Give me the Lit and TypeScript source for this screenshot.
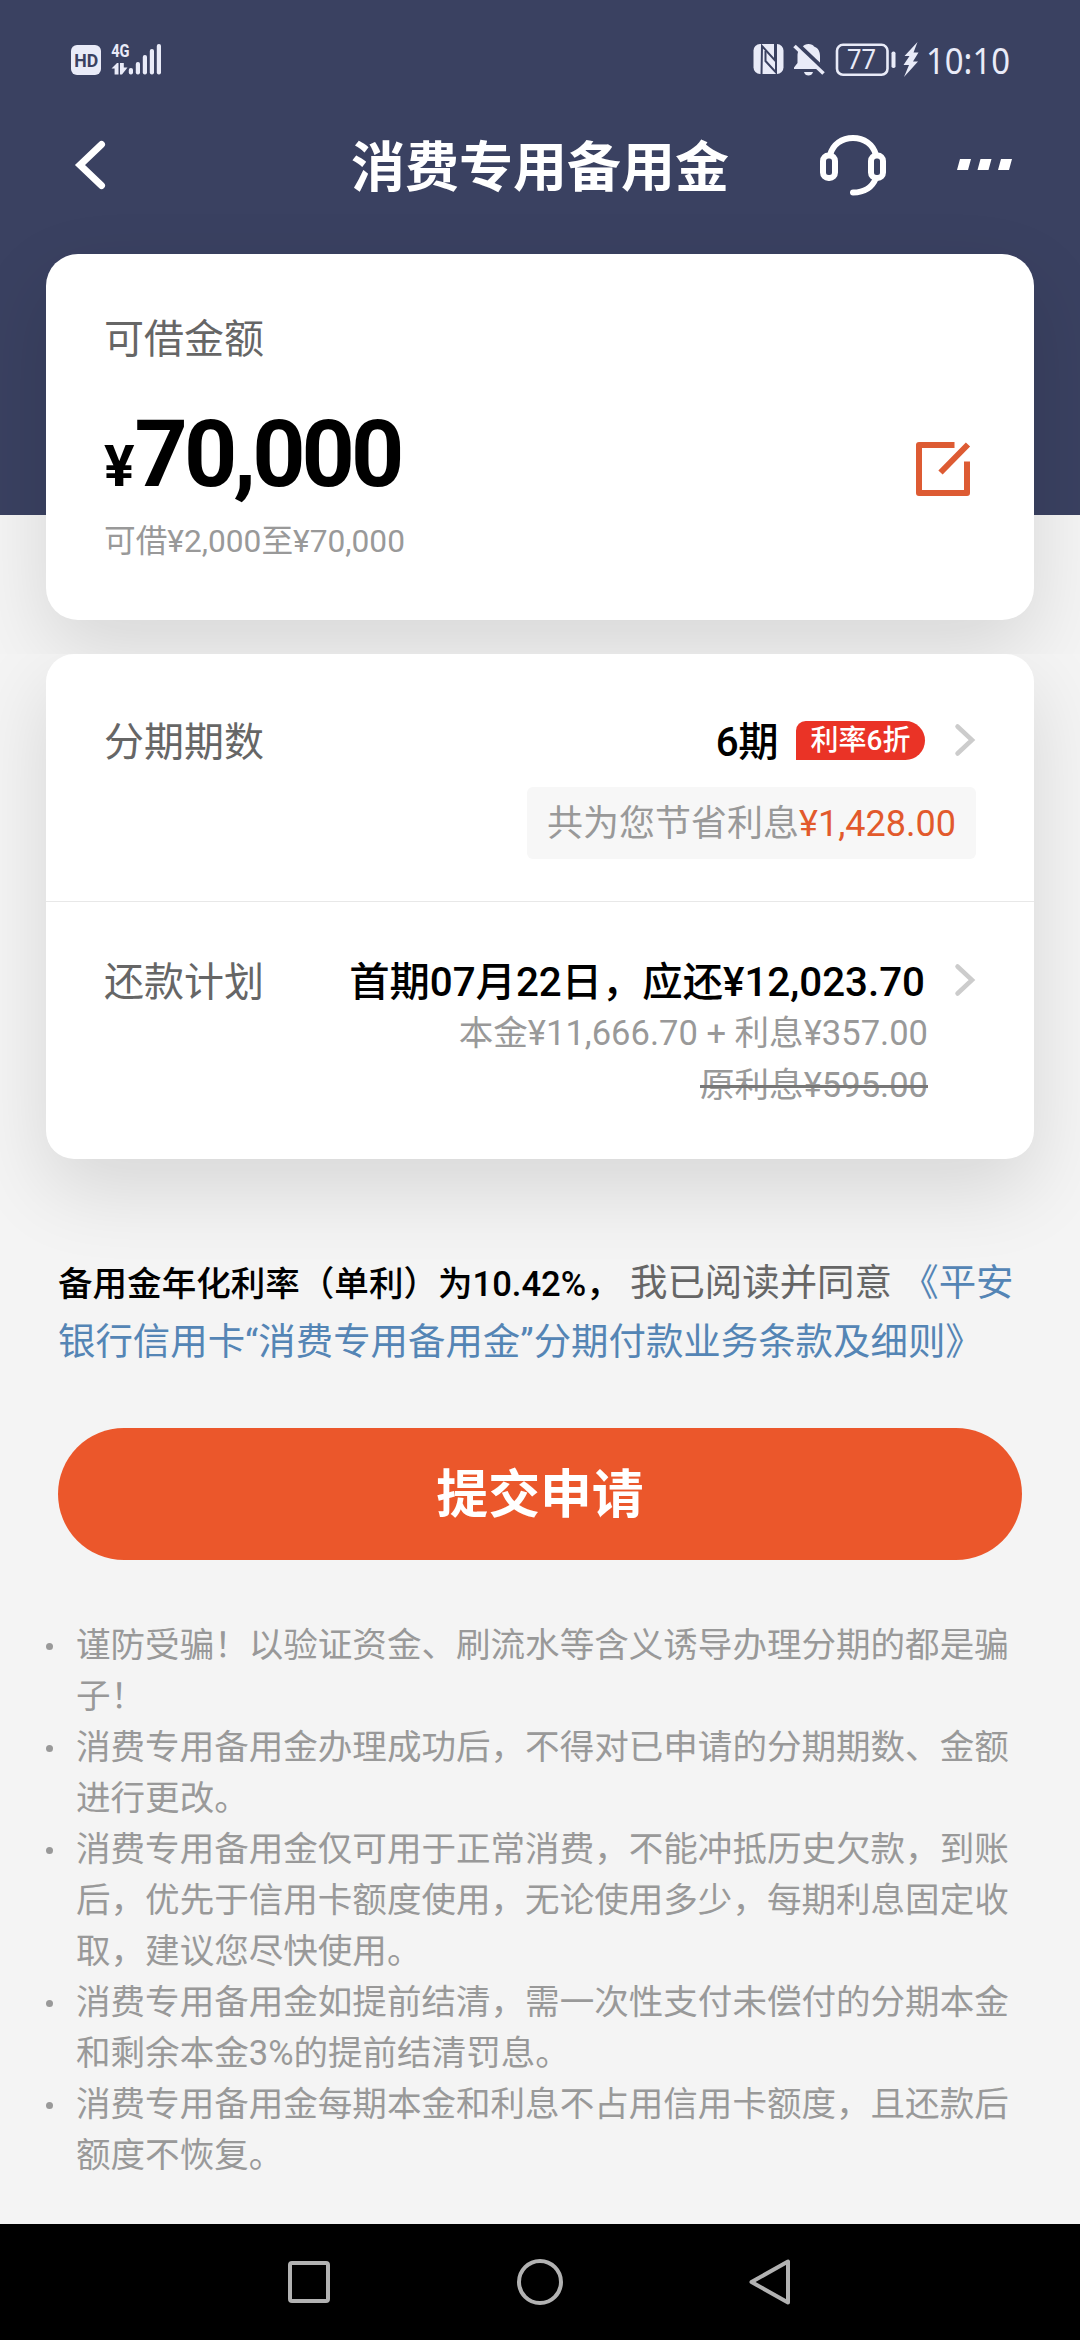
import { LitElement, html, css, svg } from "lit";
import { customElement } from "lit/decorators.js";

const NOTES: string[] = [
  "谨防受骗！以验证资金、刷流水等含义诱导办理分期的都是骗子！",
  "消费专用备用金办理成功后，不得对已申请的分期期数、金额进行更改。",
  "消费专用备用金仅可用于正常消费，不能冲抵历史欠款，到账后，优先于信用卡额度使用，无论使用多少，每期利息固定收取，建议您尽快使用。",
  "消费专用备用金如提前结清，需一次性支付未偿付的分期本金和剩余本金3%的提前结清罚息。",
  "消费专用备用金每期本金和利息不占用信用卡额度，且还款后额度不恢复。",
];

const SIGNAL_TOPS = [26, 20, 13, 7, 2];

@customElement("status-bar")
export class StatusBar extends LitElement {
  static styles = css`
    :host {
      display: flex;
      justify-content: space-between;
      height: 78px;
      padding: 36px 71px 0;
      box-sizing: border-box;
      color: #e9ebf8;
      font-family: Roboto, "Noto Sans", sans-serif;
    }
    svg {
      display: block;
      fill: currentColor;
      overflow: visible;
    }
    .cut {
      stroke: #3a4161;
      fill: none;
    }
    .line {
      stroke: currentColor;
      fill: none;
    }
    .hd {
      fill: #3a4161;
      font-size: 18px;
      font-weight: 700;
    }
    .net {
      font-size: 19px;
      font-weight: 700;
    }
    .charge {
      font-size: 27px;
    }
    .clock {
      font-size: 36px;
      font-family: "Noto Sans", sans-serif;
    }
  `;

  render() {
    return html`
      <svg width="94" height="46" viewBox="0 -6 94 46">
        <rect x="0" y="3" width="30" height="30" rx="6" />
        <text class="hd" x="3.2" y="24.600" textLength="24" lengthAdjust="spacingAndGlyphs">HD</text>
        <text class="net" x="40.200" y="15.400" textLength="18.400" lengthAdjust="spacingAndGlyphs">4G</text>
        <path d="M40.500 26.500L46 21H47.500V32.400H43.600V26.500ZM49 21H52.800V25.500H56.500L51 32.400H49Z" />
        ${SIGNAL_TOPS.map(
          (top, i) => svg`<rect x=${57.8 + i * 7} y=${top} width="4.2" height=${32.4 - top} rx="2" />`
        )}
      </svg>
      <svg width="256" height="46" viewBox="0 -6 256 46">
        <rect x="0.500" y="2" width="30" height="30" rx="6.500" />
        <path class="cut" stroke-width="2" d="M8.500 33L9 4L22 18.500V0.500" />
        <path class="cut" stroke-width="2" d="M23 2V30.500L12.500 19V9" />
        <path
          d="M50 4.500C51 1 60 1 61 4.500C65.500 6 67 10 67 14V21L71 27H41V25.500L44.500 21V14C44.500 9.500 46.500 6 50 4.500ZM51 30H60C59.500 32.500 57.500 33.400 55.500 33.400S51.500 32.500 51 30Z"
        />
        <path class="cut" stroke-width="4.500" d="M44 2L73 29.500" />
        <path class="line" stroke-width="3.600" d="M41.500 4L70.500 31.500" />
        <rect class="line" stroke-width="2.600" x="84" y="2.800" width="50.500" height="30" rx="6" />
        <rect x="138.500" y="9.500" width="4" height="16.500" rx="1.800" />
        <text class="charge" x="94" y="27" textLength="29" lengthAdjust="spacingAndGlyphs">77</text>
        <path d="M164.500 0L151.500 14H156.500L150.500 23H156L151 35L165 19.500H160L165.500 10.500H160.500Z" />
        <text class="clock" x="173" y="31.500" textLength="84" lengthAdjust="spacingAndGlyphs">10:10</text>
      </svg>
    `;
  }
}

@customElement("title-bar")
export class TitleBar extends LitElement {
  static styles = css`
    :host {
      display: grid;
      grid-template-columns: 1fr auto 1fr;
      align-items: center;
      height: 176px;
      padding: 0 67px 2px 73px;
      box-sizing: border-box;
      color: #fff;
    }
    svg {
      display: block;
      fill: none;
      stroke: currentColor;
      stroke-linecap: round;
      stroke-linejoin: round;
    }
    .title {
      font: 700 54px/60px Roboto, "Noto Sans CJK SC", sans-serif;
      padding-top: 7px;
      margin-right: 6px;
    }
    .actions {
      display: flex;
      justify-content: flex-end;
      gap: 70px;
    }
    .solid {
      fill: currentColor;
      stroke: none;
    }
  `;

  render() {
    return html`
      <svg width="34" height="52" viewBox="0 0 34 52">
        <path stroke-width="7" stroke-linejoin="miter" d="M28.500 5.500L7 26L28.500 46.500" />
      </svg>
      <div class="title">消费专用备用金</div>
      <div class="actions">
        <svg width="68" height="62" viewBox="0 0 68 62">
          <rect x="4" y="21.500" width="12" height="22.500" rx="5.500" stroke-width="6" />
          <rect x="52" y="21.500" width="12" height="22.500" rx="5.500" stroke-width="6" />
          <path stroke-width="6" d="M11 21C14 10 23 4 34 4S54 10 57 21M57 44C53 54 45 58.500 34 58.500" />
        </svg>
        <svg width="56" height="62" viewBox="0 0 56 62">
          <path class="solid" d="M3 25H14L11 36H0ZM23.500 25H34.500L31.500 36H20.500ZM44 25H55L52 36H41Z" />
        </svg>
      </div>
    `;
  }
}

@customElement("system-nav")
export class SystemNav extends LitElement {
  static styles = css`
    :host {
      display: flex;
      flex: none;
      justify-content: center;
      align-items: center;
      gap: 181px;
      height: 116px;
      background: #000;
    }
    svg {
      display: block;
      fill: none;
      stroke: #b2b2b2;
      stroke-width: 4;
      stroke-linejoin: round;
    }
  `;

  render() {
    return html`
      <svg width="50" height="50" viewBox="0 0 50 50"><rect x="6" y="6" width="38" height="38" rx="2" /></svg>
      <svg width="50" height="50" viewBox="0 0 50 50"><circle cx="25" cy="25" r="21" /></svg>
      <svg width="50" height="50" viewBox="0 0 50 50"><path d="M5.500 25L42 4.500V45.500Z" /></svg>
    `;
  }
}

@customElement("app-root")
export class AppRoot extends LitElement {
  static styles = css`
    :host {
      display: flex;
      flex-direction: column;
      width: 1080px;
      height: 2340px;
      overflow: hidden;
      background: #f4f4f4;
      font-family: Roboto, "Noto Sans CJK SC", sans-serif;
      color: #000;
    }
    .top {
      flex: none;
      height: 654px;
      background: linear-gradient(#3a4161 515px, #f4f4f4 515px);
      display: flex;
      flex-direction: column;
    }
    .card {
      margin: 0 46px;
      background: #fff;
      border-radius: 32px;
      box-shadow: 0 30px 80px rgba(0, 0, 0, 0.12);
      box-sizing: border-box;
    }
    .amount-card {
      height: 366px;
      padding: 65px 63px 0 58px;
    }
    .label {
      font-size: 40px;
      line-height: 41px;
      color: #666;
    }
    .amount-row {
      display: flex;
      justify-content: space-between;
      align-items: center;
      margin-top: 48px;
      height: 93px;
    }
    .amount {
      margin-top: 12px;
      font-size: 93px;
      line-height: 93px;
      font-weight: 700;
      letter-spacing: -4px;
    }
    .yen {
      font-size: 57px;
      letter-spacing: 0;
    }
    .edit {
      display: block;
      margin-top: 29px;
      fill: none;
      stroke: #dd5b33;
      stroke-width: 6;
      stroke-linejoin: round;
    }
    .range {
      margin-top: 21px;
      font-size: 31.680px;
      line-height: 40px;
      color: #999;
    }
    .body {
      flex: 1;
      min-height: 0;
      overflow: hidden;
      background: #f4f4f4;
    }
    .plan-card {
      height: 505px;
      border-radius: 28px;
    }
    .row {
      display: flex;
      justify-content: space-between;
      padding: 68px 58px 0;
      height: 247px;
      box-sizing: border-box;
    }
    .row-plan {
      padding-top: 60px;
      border-top: 1px solid #e8e8e8;
    }
    .side {
      display: flex;
      flex-direction: column;
      align-items: flex-end;
    }
    .head {
      display: flex;
      align-items: center;
      height: 41px;
      font-size: 40.320px;
      line-height: 41px;
      font-weight: 500;
      white-space: nowrap;
    }
    .period {
      letter-spacing: -0.5px;
    }
    .badge {
      margin: 0 0 5px 18px;
      width: 129px;
      height: 39px;
      line-height: 40px;
      border-radius: 10px 20px 20px 0;
      background: #ea3326;
      color: #fff;
      font-size: 28px;
      text-align: center;
    }
    .chevron {
      display: block;
      margin: 0 0 6px 29px;
      fill: none;
      stroke: #ccc;
      stroke-width: 4.500;
      stroke-linecap: round;
    }
    .saving {
      margin-top: 24px;
      height: 72px;
      padding: 0 20px;
      border-radius: 6px;
      background: #f7f7f7;
      font-size: 36px;
      line-height: 75px;
      color: #999;
    }
    .saved {
      color: #e25a2c;
    }
    .detail {
      margin-right: 48px;
      font-size: 34.560px;
      line-height: 52px;
      color: #999;
      white-space: nowrap;
    }
    .detail-first {
      margin-top: 4px;
    }
    .struck {
      text-decoration: line-through #777 3px;
    }
    .terms {
      margin: 95px 58px 0;
      font-size: 37.440px;
      line-height: 59px;
      color: #666;
    }
    .rate {
      font-size: 34.560px;
      line-height: 1;
      font-weight: 500;
      color: #000;
    }
    .link {
      color: #5485b5;
    }
    .submit {
      display: block;
      margin: 56px 58px 0;
      width: 964px;
      height: 132px;
      padding: 4px 0 0;
      border: 0;
      border-radius: 66px;
      background: #eb572b;
      color: #fff;
      font: 700 51.840px/128px Roboto, "Noto Sans CJK SC", sans-serif;
    }
    .notes {
      list-style: none;
      margin: 60px 58px 0 46px;
      padding: 0;
      font-size: 34.560px;
      line-height: 51px;
      color: #999;
    }
    .note {
      display: flex;
    }
    .dot {
      flex: none;
      width: 7px;
      height: 7px;
      margin: 23px 23px 0 0;
      border-radius: 50%;
      background: #999;
    }
  `;

  private chevron() {
    return html`<svg class="chevron" width="22" height="34" viewBox="0 0 22 34">
      <path d="M3.500 3.500L18 17L3.500 30.500" />
    </svg>`;
  }

  render() {
    return html`
      <div class="top">
        <status-bar></status-bar>
        <title-bar></title-bar>
        <div class="card amount-card">
          <div class="label">可借金额</div>
          <div class="amount-row">
            <div class="amount"><span class="yen">¥</span>70,000</div>
            <svg class="edit" width="56" height="56" viewBox="0 0 56 56">
              <path d="M39.500 4H4V52H52V20.500M53 3.500L25.500 31.500" />
            </svg>
          </div>
          <div class="range">可借¥2,000至¥70,000</div>
        </div>
      </div>
      <div class="body">
        <div class="card plan-card">
          <div class="row">
            <div class="label">分期期数</div>
            <div class="side">
              <div class="head">
                <span class="period">6期</span><span class="badge">利率6折</span>${this.chevron()}
              </div>
              <div class="saving">共为您节省利息<span class="saved">¥1,428.00</span></div>
            </div>
          </div>
          <div class="row row-plan">
            <div class="label">还款计划</div>
            <div class="side">
              <div class="head">首期07月22日，应还¥12,023.70${this.chevron()}</div>
              <div class="detail detail-first">本金¥11,666.70 + 利息¥357.00</div>
              <div class="detail struck">原利息¥595.00</div>
            </div>
          </div>
        </div>
        <div class="terms">
          <span class="rate">备用金年化利率（单利）为10.42%，</span> 我已阅读并同意
          <span class="link">《平安银行信用卡“消费专用备用金”分期付款业务条款及细则》</span>
        </div>
        <button class="submit">提交申请</button>
        <ul class="notes">
          ${NOTES.map((note) => html`<li class="note"><span class="dot"></span><span>${note}</span></li>`)}
        </ul>
      </div>
      <system-nav></system-nav>
    `;
  }
}
